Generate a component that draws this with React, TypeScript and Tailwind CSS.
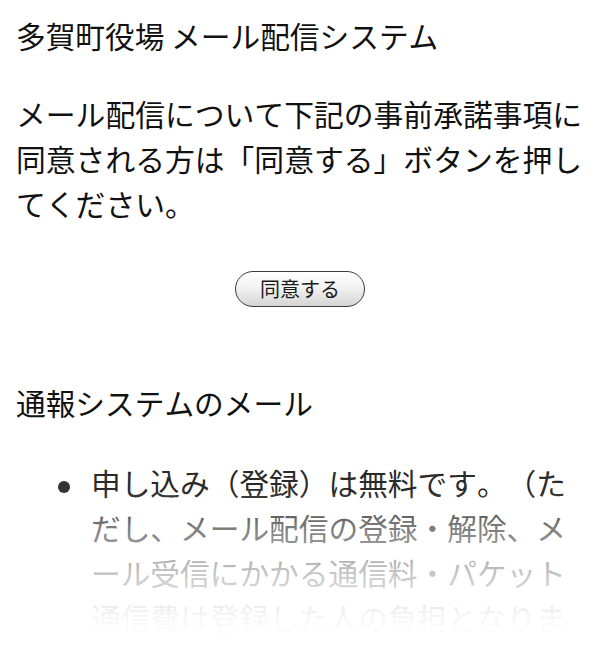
export default function App() {
  return (
    <div
      className="min-h-screen overflow-hidden bg-white px-4 text-[#111] [font-kerning:none] [text-spacing-trim:space-all]"
      style={{ fontFamily: '"Noto Sans CJK JP", "Noto Sans", sans-serif' }}
    >
      <h1 className="pt-[13px] text-[29.7px] leading-[46px] font-normal whitespace-nowrap">
        多賀町役場 メール配信システム
      </h1>

      <p className="mt-[32px] text-[29.8px] leading-[45px] whitespace-nowrap">
        メール配信について下記の事前承諾事項に
        <br />
        同意される方は「同意する」ボタンを押し
        <br />
        てください。
      </p>

      <div className="mt-[45px] flex justify-center">
        <button
          type="button"
          className="h-[36px] w-[130px] rounded-full border-[1.5px] border-[#3a3a3a] bg-[linear-gradient(to_bottom,#ffffff,#f3f3f3_45%,#d4d4d4)] text-[20px] leading-none text-[#1a1a1a]"
        >
          同意する
        </button>
      </div>

      <h2 className="mt-[73px] text-[29.7px] leading-[45px] font-normal whitespace-nowrap">
        通報システムのメール
      </h2>

      <div className="relative mt-[35px]">
        <div className="flex pl-[42px]">
          <div className="w-[33px] shrink-0">
            <span className="mt-[21px] block h-[12px] w-[12px] rounded-full bg-[#333]" />
          </div>
          <p className="text-[29.7px] leading-[45px] text-[#2a2a2a] whitespace-nowrap">
            申し込み（登録）は無料です。（た
            <br />
            だし、メール配信の登録・解除、メ
            <br />
            ール受信にかかる通信料・パケット
            <br />
            通信費は登録した人の負担となりま
          </p>
        </div>
        <div className="pointer-events-none absolute inset-x-0 top-[30px] bottom-0 bg-[linear-gradient(to_bottom,rgba(255,255,255,0)_0px,rgba(255,255,255,0.38)_37px,rgba(255,255,255,0.72)_82px,rgba(255,255,255,0.95)_124px,#fff_145px)]" />
      </div>
    </div>
  );
}
